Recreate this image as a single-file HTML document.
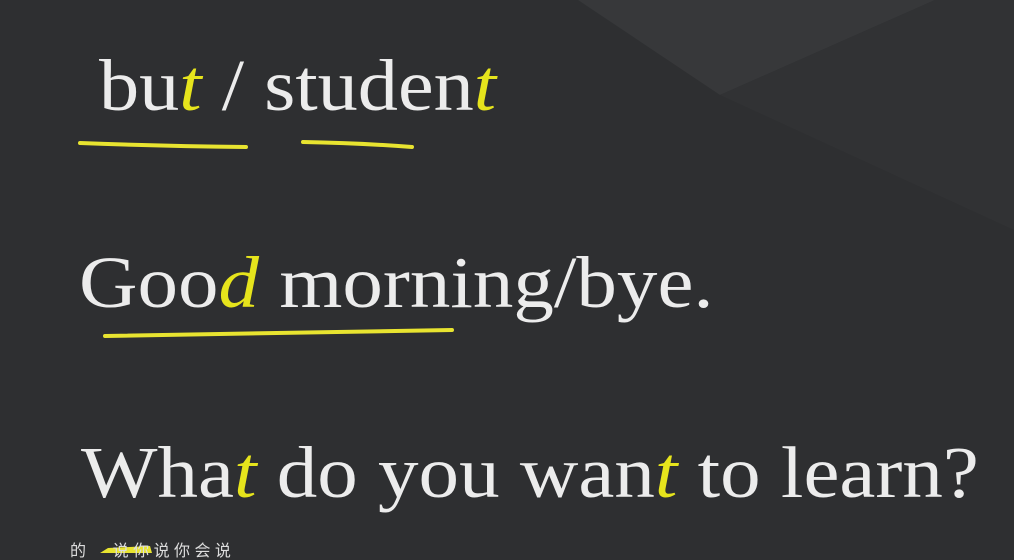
<!DOCTYPE html>
<html><head><meta charset="utf-8"><style>
html,body{margin:0;padding:0}
body{width:1014px;height:553px;overflow:hidden;position:relative;background:#2e2f31;font-family:"Liberation Serif",serif;color:#ececec}
.t{position:absolute;white-space:nowrap;line-height:1;transform-origin:0 0;transform:scaleX(1.1)}
i{color:#e6e41c;font-style:italic}
</style></head><body>
<svg width="1014" height="553" style="position:absolute;left:0;top:0">
<polygon points="578,0 720,95 935,0" fill="#37383a"/>
<polygon points="720,95 935,0 1014,0 1014,230" fill="#313234"/>
<g fill="none" stroke="#e8e430" stroke-width="4" stroke-linecap="round">
<path d="M80,143 Q160,146 246,147"/>
<path d="M303,142 Q360,143 412,147"/>
<path d="M105,336 Q280,333 452,330"/>
</g>
<path d="M100,553 L108,548 L150,546 L152,553Z" fill="#e8e430"/>
</svg>
<div class="t" style="left:99px;top:49px;font-size:73px">bu<i>t</i> / studen<i>t</i></div>
<div class="t" style="left:79px;top:246px;font-size:73px;transform:scaleX(1.11)">Goo<i>d</i> morning/bye.</div>
<div class="t" style="left:81px;top:436px;font-size:73px;transform:scaleX(1.11)">Wha<i>t</i> do you wan<i>t</i> to learn?</div>
<div class="t" style="left:70px;top:544px;font-size:16px;color:#ddd;font-family:'Liberation Sans','Noto Sans CJK SC',sans-serif;transform:none">的 &nbsp; &nbsp; &nbsp;说 你 说 你 会 说</div>
</body></html>
